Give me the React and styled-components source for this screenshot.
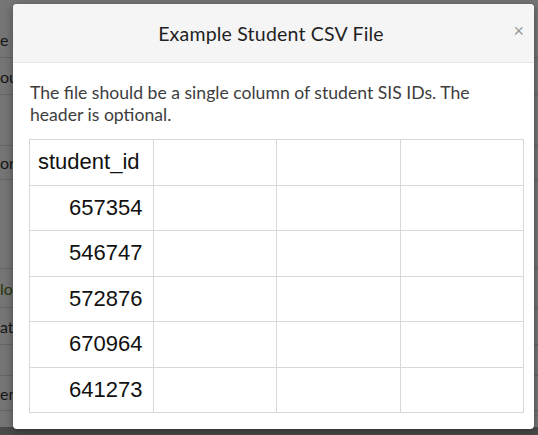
import React from "react";
import styled, { createGlobalStyle } from "styled-components";

const Global = createGlobalStyle`
  html, body { margin: 0; padding: 0; }
  body { width: 538px; height: 435px; overflow: hidden; background: #fff; font-family: "Lato", "Open Sans", sans-serif; }
`;

const Page = styled.div`
  position: relative;
  width: 538px;
  height: 435px;
  overflow: hidden;
  display: flex;
  flex-direction: column;
`;

const PageList = styled.div`
  flex: 1;
  display: flex;
  flex-direction: column;
  padding-top: 22px;
`;

const PageRow = styled.div`
  height: ${(p) => p.$h}px;
  border-bottom: 1px solid #ddd;
  display: flex;
  align-items: center;
  font-size: 16px;
  color: ${(p) => p.$color || "#333"};
  white-space: nowrap;
`;

const PageFooter = styled.div`
  height: 8px;
  background: #a4a4a4;
`;

const Overlay = styled.div`
  position: absolute;
  inset: 0;
  background: rgba(0, 0, 0, 0.54);
`;

const Modal = styled.div`
  position: absolute;
  left: 13px;
  top: 4px;
  width: 521px;
  height: 425px;
  background: #fff;
  border-radius: 4px;
  box-shadow: 0 2px 8px rgba(0, 0, 0, 0.4);
  display: flex;
  flex-direction: column;
  overflow: hidden;
`;

const Header = styled.div`
  position: relative;
  height: 59px;
  padding-right: 5px;
  background: #f5f5f5;
  border-bottom: 1px solid #e6e6e6;
  display: flex;
  align-items: center;
  justify-content: center;
`;

const Title = styled.h2`
  margin: 0;
  font-size: 19.5px;
  font-weight: 400;
  color: #1f1f1f;
  letter-spacing: 0.2px;
`;

const Close = styled.button`
  position: absolute;
  right: 6px;
  top: 14px;
  border: 0;
  background: none;
  font-family: "Liberation Sans", Arial, sans-serif;
  font-size: 18px;
  color: #9a9a9a;
  cursor: pointer;
  padding: 4px;
  line-height: 1;
`;

const Body = styled.div`
  padding: 19px 10px 16px 16px;
  display: flex;
  flex-direction: column;
  gap: 13px;
`;

const Text = styled.p`
  margin: 0;
  padding: 0 16px 0 1px;
  font-size: 17.6px;
  line-height: 22px;
  color: #3d3d3d;
`;

const Table = styled.table`
  border-collapse: collapse;
  width: 495px;
  table-layout: fixed;
  font-family: "Liberation Sans", Arial, Helvetica, sans-serif;
  font-size: 22px;
  color: #111;
`;

const Cell = styled.td`
  height: 44.5px;
  padding: 0 10px 0 8px;
  border: 1px solid #d8d8d8;
  text-align: ${(p) => (p.$num ? "right" : "left")};
  vertical-align: middle;
`;

const ids = ["student_id", "657354", "546747", "572876", "670964", "641273"];

const bgRows = [
  { h: 35, t: "e t" },
  { h: 36, t: "ou" },
  { h: 50, t: "" },
  { h: 33, t: "or" },
  { h: 88, t: "" },
  { h: 38, t: "lo", c: "#5a7a1a" },
  { h: 36, t: "at" },
  { h: 30, t: "" },
  { h: 34, t: "en" },
];

export default function App() {
  return (
    <Page>
      <Global />
      <PageList>
        {bgRows.map((r, i) => (
          <PageRow key={i} $h={r.h} $color={r.c}>
            {r.t}
          </PageRow>
        ))}
      </PageList>
      <PageFooter />
      <Overlay />
      <Modal>
        <Header>
          <Title>Example Student CSV File</Title>
          <Close aria-label="Close">×</Close>
        </Header>
        <Body>
          <Text>
            The file should be a single column of student SIS IDs. The header is optional.
          </Text>
          <Table>
            <tbody>
              {ids.map((id, i) => (
                <tr key={id}>
                  <Cell $num={i > 0}>{id}</Cell>
                  <Cell />
                  <Cell />
                  <Cell />
                </tr>
              ))}
            </tbody>
          </Table>
        </Body>
      </Modal>
    </Page>
  );
}
